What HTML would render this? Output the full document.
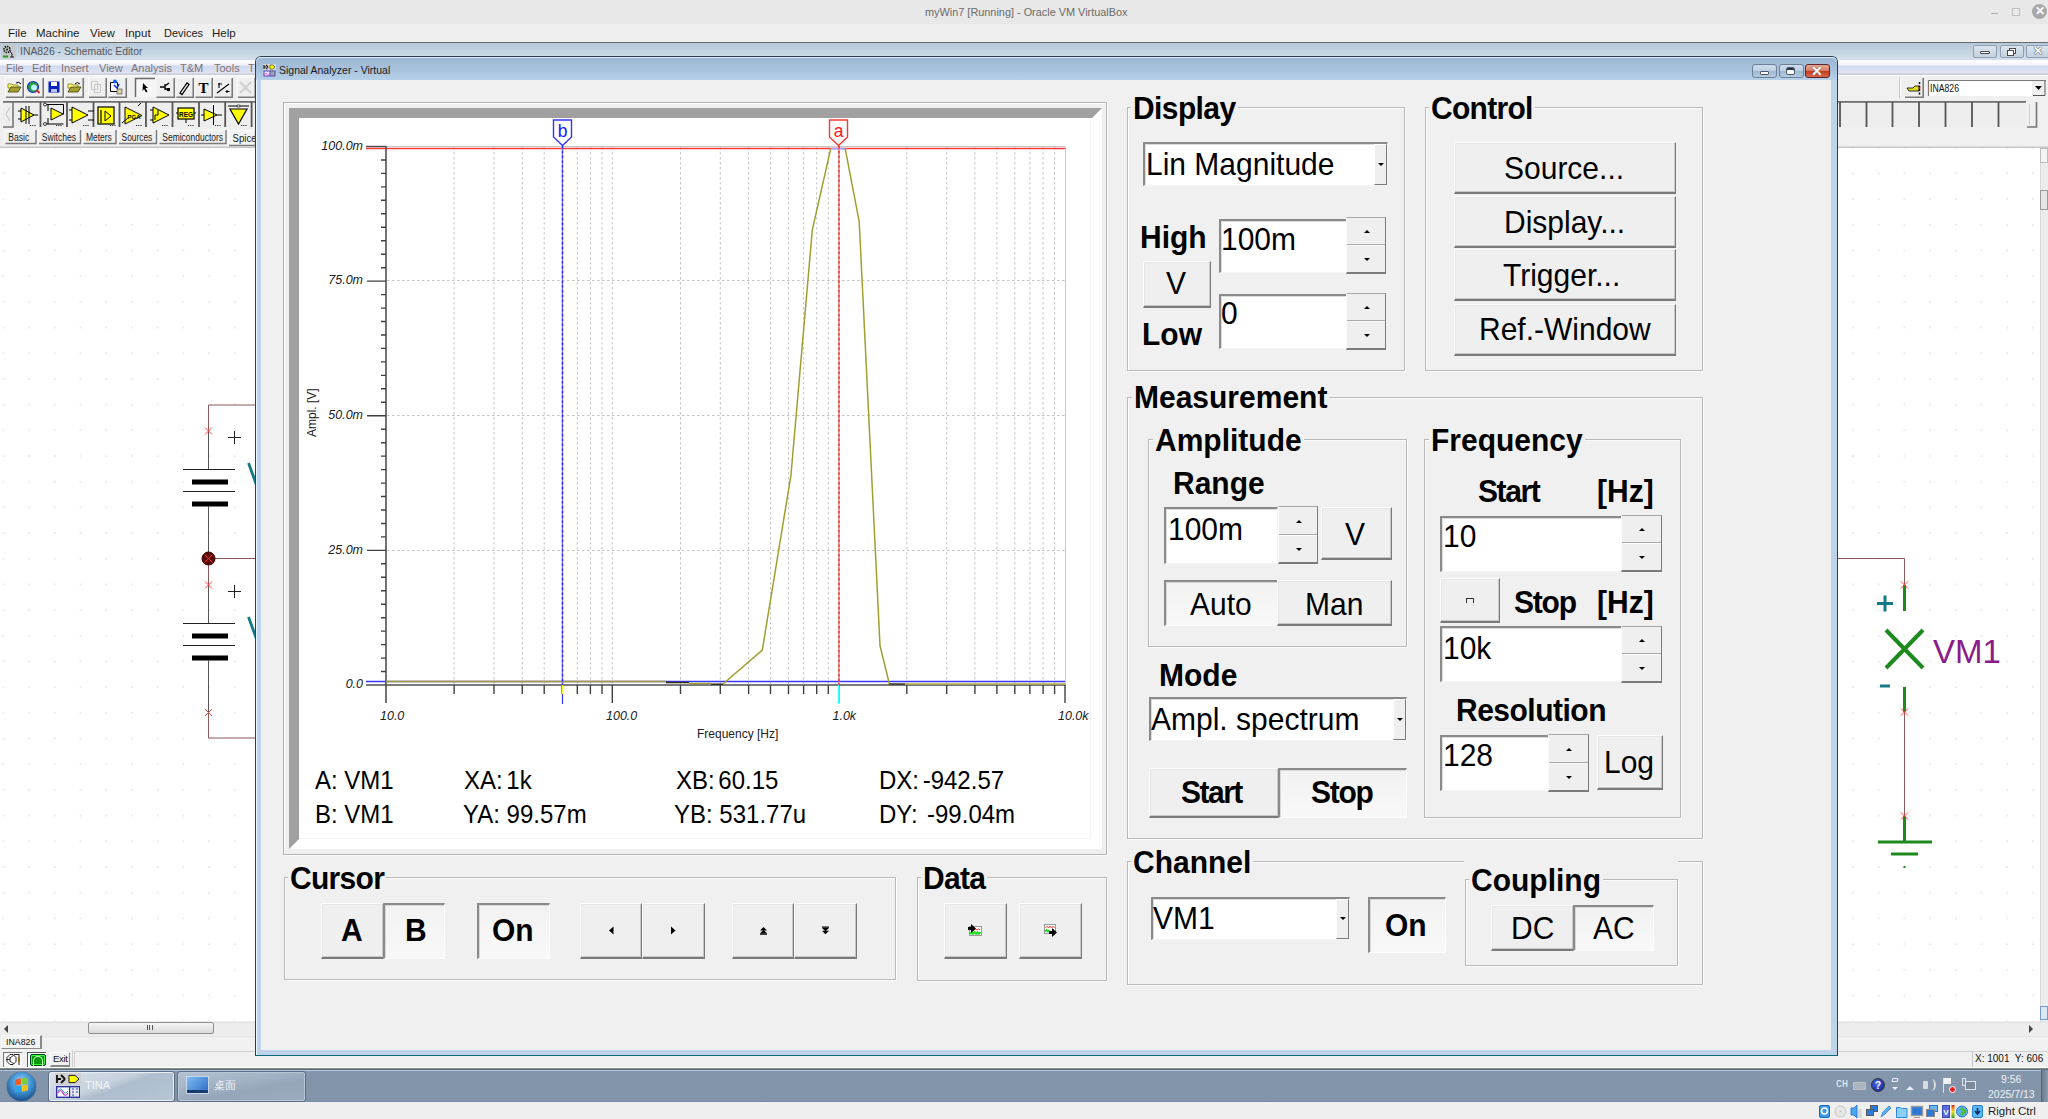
<!DOCTYPE html>
<html><head><meta charset="utf-8">
<style>
*{box-sizing:border-box}
html,body{margin:0;padding:0}
body{width:2048px;height:1119px;position:relative;overflow:hidden;background:#efefef;font-family:"Liberation Sans",sans-serif;color:#000}
.a{position:absolute}
.t{position:absolute;line-height:1;white-space:pre}
.b30{font-size:30px;font-weight:bold;transform:scaleY(1.065);transform-origin:0 84.65%}
.r30{font-size:30px;transform:scaleY(1.065);transform-origin:0 84.65%}
/* dialog buttons */
.btn{position:absolute;background:#efefef;border-top:1px solid #fdfdfd;border-left:1px solid #fdfdfd;border-right:1px solid #7a7a7a;border-bottom:2px solid #7a7a7a;box-shadow:inset -1px -1px 0 #c8c8c8, inset 1px 1px 0 #e6e6e6}
.btnp{position:absolute;background:linear-gradient(#f2f2f2,#f8f8f8);border-top:2px solid #8a8a8a;border-left:2px solid #8a8a8a;border-right:1px solid #fdfdfd;border-bottom:1px solid #fdfdfd;box-shadow:inset 1px 1px 0 #d8d8d8}
.edit{position:absolute;background:#fff;border-top:2px solid #8a8a8a;border-left:2px solid #8a8a8a;border-right:1px solid #f4f4f4;border-bottom:1px solid #f4f4f4;box-shadow:inset 1px 1px 0 #dcdcdc}
.grp{position:absolute;border:1px solid #b9b9b9;box-shadow:1px 1px 0 #fcfcfc, inset 1px 1px 0 #fcfcfc}
.lbl{position:absolute;line-height:1;white-space:pre;background:#f0f0f0;font-size:30px;font-weight:bold;padding:0 2px 0 2px;transform:scaleY(1.065);transform-origin:0 84.65%}
.spin{position:absolute;background:#efefef;border-top:1px solid #fdfdfd;border-left:1px solid #fdfdfd;border-right:1px solid #7a7a7a;border-bottom:1px solid #7a7a7a}
.arr{position:absolute;left:50%;top:50%;width:0;height:0;border-left:3px solid transparent;border-right:3px solid transparent;margin-left:-3px}
.up{border-bottom:3px solid #000;margin-top:-2px}
.dn{border-top:3px solid #000;margin-top:-2px}
</style></head>
<body>

<!-- ===== VirtualBox host title bar ===== -->
<div class="a" style="left:0;top:0;width:2048px;height:24px;background:#e8e8e8"></div>
<div class="t" style="left:925px;top:6.5px;font-size:10.9px;color:#6a6a6a">myWin7 [Running] - Oracle VM VirtualBox</div>
<div class="a" style="left:1991px;top:13px;width:7px;height:1px;background:#b0b0b0"></div>
<div class="a" style="left:2012px;top:8px;width:8px;height:8px;border:1px solid #c0c0c0"></div>
<div class="a" style="left:2032px;top:4px;width:15px;height:15px;border-radius:50%;background:#a8a8a8;color:#fff;font-size:12px;line-height:15px;text-align:center;font-weight:bold">&#x2715;</div>

<!-- ===== VirtualBox menu ===== -->
<div class="a" style="left:0;top:24px;width:2048px;height:18px;background:#efefef"></div>
<div class="t" style="left:8px;top:28px;font-size:11.5px;color:#1e1e1e">File</div>
<div class="t" style="left:36px;top:28px;font-size:11.5px;color:#1e1e1e">Machine</div>
<div class="t" style="left:90px;top:28px;font-size:11.5px;color:#1e1e1e">View</div>
<div class="t" style="left:125px;top:28px;font-size:11.5px;color:#1e1e1e">Input</div>
<div class="t" style="left:164px;top:28px;font-size:11px;color:#1e1e1e">Devices</div>
<div class="t" style="left:212px;top:28px;font-size:11.5px;color:#1e1e1e">Help</div>
<div class="a" style="left:0;top:42px;width:2048px;height:1px;background:#6a6a6a"></div>

<!-- ===== Guest: TINA window ===== -->
<!-- TINA title bar -->
<div class="a" style="left:0;top:43px;width:2048px;height:17px;background:linear-gradient(#b7c8da,#d4dfea)"></div>
<svg class="a" style="left:1px;top:44px" width="15" height="15" viewBox="0 0 15 15"><rect x="0.5" y="0.5" width="14" height="14" rx="1.5" fill="#c4c8cc"/><circle cx="6" cy="5.5" r="3" fill="none" stroke="#151515" stroke-width="1.6" stroke-dasharray="1.4 0.9"/><circle cx="6" cy="5.5" r="1" fill="#151515"/><path d="M9 7l2 3 M11 10v3 M9 13h4" stroke="#202020" stroke-width="1"/><rect x="2" y="11.5" width="5" height="2" fill="#20a020"/></svg>
<div class="t" style="left:20px;top:46.5px;font-size:10.4px;color:#505860">INA826 - Schematic Editor</div>
<!-- TINA window buttons (right) -->
<div class="a" style="left:1973px;top:45px;width:24px;height:13px;border:1px solid #8e9fb3;border-radius:2px;background:linear-gradient(#dbe5ef,#c3d1df)"></div>
<div class="a" style="left:1980px;top:51px;width:10px;height:3px;border:1px solid #4a4a4a;border-radius:1px;background:#fff"></div>
<div class="a" style="left:2000px;top:45px;width:24px;height:13px;border:1px solid #8e9fb3;border-radius:2px;background:linear-gradient(#dbe5ef,#c3d1df)"></div>
<div class="a" style="left:2009px;top:48px;width:7px;height:6px;border:1px solid #4a4a4a;background:#fff"></div>
<div class="a" style="left:2007px;top:50px;width:7px;height:6px;border:1px solid #4a4a4a;background:#fff"></div>
<div class="a" style="left:2026px;top:45px;width:24px;height:13px;border:1px solid #8e9fb3;border-radius:2px;background:linear-gradient(#dbe5ef,#c3d1df)"></div>
<div class="t" style="left:2033px;top:45px;font-size:12px;font-weight:bold;color:#fff;text-shadow:0 0 1px #333,0 0 1px #333">&#x2715;</div>

<!-- TINA menu -->
<div class="a" style="left:0;top:60px;width:2048px;height:15px;background:linear-gradient(#fdfdff 0,#fdfdff 2px,#eef0f8 5px,#d3daee 6px,#dfe3f4 13px,#c8ccd8 14px,#c8ccd8 15px)"></div>
<div class="t" style="left:6px;top:63px;font-size:11px;color:#7d7377">File</div>
<div class="t" style="left:32px;top:63px;font-size:11px;color:#7d7377">Edit</div>
<div class="t" style="left:61px;top:63px;font-size:11px;color:#7d7377">Insert</div>
<div class="t" style="left:99px;top:63px;font-size:11px;color:#7d7377">View</div>
<div class="t" style="left:131px;top:63px;font-size:11px;color:#7d7377">Analysis</div>
<div class="t" style="left:180px;top:63px;font-size:11px;color:#7d7377">T&amp;M</div>
<div class="t" style="left:214px;top:63px;font-size:11px;color:#7d7377">Tools</div>
<div class="t" style="left:248px;top:63px;font-size:11px;color:#7d7377">T</div>
<div class="a" style="left:0;top:75px;width:2048px;height:1px;background:#fdfdfd"></div>

<!-- toolbar row 1 -->
<div class="a" style="left:0;top:76px;width:2048px;height:72px;background:#f0f0f0"></div>
<!-- canvas -->
<div class="a" style="left:0;top:147px;width:2040px;height:874px;background-color:#fff;background-image:radial-gradient(circle at 1px 1px,#c8c8c8 0.5px,transparent 0.8px);background-size:25.69px 25.69px;background-position:2.5px 25.4px"></div>
<!-- vertical scrollbar -->
<div class="a" style="left:2040px;top:147px;width:8px;height:875px;background:#ececec;border-left:1px solid #dadada"></div>
<div class="a" style="left:2040px;top:148px;width:8px;height:15px;background:#f4f4f4;border:1px solid #bcbcbc"></div>
<div class="a" style="left:2040px;top:190px;width:8px;height:20px;background:#e6e6e6;border:1px solid #9a9a9a"></div>
<div class="a" style="left:2040px;top:1006px;width:8px;height:14px;background:#dbe8f6;border:1px solid #6f9bd0"></div>
<!-- horizontal scrollbar -->
<div class="a" style="left:0;top:1022px;width:2048px;height:14px;background:#ededed;border-top:1px solid #e2e2e2"></div>
<div class="a" style="left:4px;top:1025px;width:0;height:0;border-top:4px solid transparent;border-bottom:4px solid transparent;border-right:4px solid #444"></div>
<div class="a" style="left:2029px;top:1025px;width:0;height:0;border-top:4px solid transparent;border-bottom:4px solid transparent;border-left:4px solid #444"></div>
<div class="a" style="left:88px;top:1022px;width:126px;height:12px;border:1px solid #8f8f8f;border-radius:2px;background:linear-gradient(#f4f4f4,#dadada)"></div>
<div class="a" style="left:147px;top:1025px;width:6px;height:5px;border-left:1px solid #555;border-right:1px solid #555"></div>
<div class="a" style="left:149px;top:1025px;width:2px;height:5px;border-left:1px solid #555"></div>
<!-- file tab row -->
<div class="a" style="left:0;top:1036px;width:2048px;height:13px;background:#f0f0f0;border-top:1px solid #e4e4e4"></div>
<div class="a" style="left:1px;top:1035px;width:41px;height:14px;background:#f2f2f2;border-left:1px solid #fff;border-top:1px solid #fff;border-right:2px solid #8a8a8a;border-bottom:1px solid #8a8a8a"></div>
<div class="t" style="left:6px;top:1038px;font-size:8.8px;color:#111">INA826</div>
<!-- status bar -->
<div class="a" style="left:0;top:1049px;width:2048px;height:20px;background:#f0f0f0"></div>
<div class="a" style="left:3px;top:1052px;width:19px;height:15px;border-top:1px solid #777;border-left:1px solid #777;background:#f7f7f7"></div>
<svg class="a" style="left:5px;top:1053px" width="17" height="13" viewBox="0 0 17 13"><path d="M5 1.5l3 0 3 3v4l-3 3h-3l-3-3v-4z" fill="#fff" stroke="#222" stroke-width="1"/><path d="M1 6.5h4 M5 4v5 M5 5l4-3 M5 8l4 3" stroke="#222" stroke-width="0.9" fill="none"/><path d="M9 1.5h5 M14 1v11" stroke="#222" stroke-width="1" fill="none"/><rect x="13" y="4" width="2" height="5" fill="#8a7a20"/></svg>
<div class="a" style="left:27px;top:1052px;width:19px;height:15px;border-top:1px solid #555;border-left:1px solid #555;background:#f7f7f7"></div>
<div class="a" style="left:30px;top:1054px;width:16px;height:12px;background:#0a9a0a;border:1px solid #042;border-radius:2px;box-shadow:inset 0 0 0 1px #3f3"></div>
<div class="a" style="left:33px;top:1056px;width:10px;height:10px;border:1px solid #cfc;border-bottom:none;border-radius:5px 5px 0 0"></div>
<div class="a" style="left:50px;top:1052px;width:20px;height:15px;border-right:1px solid #888;border-bottom:2px solid #888;border-top:1px solid #fff;border-left:1px solid #fff;background:#f0f0f0"></div>
<div class="t" style="left:53px;top:1054px;font-size:9.5px;color:#111;letter-spacing:-0.3px">Exit</div>
<div class="a" style="left:72px;top:1050px;width:1px;height:18px;background:#cfcfcf"></div>
<div class="a" style="left:74px;top:1051px;width:1974px;height:17px;border-top:1px solid #d0d0d0;border-left:1px solid #d0d0d0"></div>
<div class="a" style="left:1972px;top:1051px;width:76px;height:17px;border-left:1px solid #c8c8c8"></div>
<div class="t" style="left:1975px;top:1054px;font-size:10px;color:#111">X: 1001  Y: 606</div>

<svg class="a" style="left:0;top:0" width="2048" height="150" viewBox="0 0 2048 150">
<rect x="5" y="78" width="19" height="19" fill="#efefef"/>
<path d="M5 77.5H23 M5.5 78V96" stroke="#fafafa" stroke-width="1" fill="none"/>
<path d="M23.25 78V97.2H6" stroke="#7a7a7a" stroke-width="1.6" fill="none"/>
<rect x="24.5" y="78" width="19.5" height="19" fill="#efefef"/>
<path d="M24.5 77.5H43 M25.0 78V96" stroke="#fafafa" stroke-width="1" fill="none"/>
<path d="M43.25 78V97.2H25.5" stroke="#7a7a7a" stroke-width="1.6" fill="none"/>
<rect x="44.5" y="78" width="19.5" height="19" fill="#efefef"/>
<path d="M44.5 77.5H63 M45.0 78V96" stroke="#fafafa" stroke-width="1" fill="none"/>
<path d="M63.25 78V97.2H45.5" stroke="#7a7a7a" stroke-width="1.6" fill="none"/>
<rect x="64.5" y="78" width="19.5" height="19" fill="#efefef"/>
<path d="M64.5 77.5H83 M65.0 78V96" stroke="#fafafa" stroke-width="1" fill="none"/>
<path d="M83.25 78V97.2H65.5" stroke="#7a7a7a" stroke-width="1.6" fill="none"/>
<rect x="88" y="78" width="19" height="19" fill="#efefef"/>
<path d="M88 77.5H106 M88.5 78V96" stroke="#fafafa" stroke-width="1" fill="none"/>
<path d="M106.25 78V97.2H89" stroke="#7a7a7a" stroke-width="1.6" fill="none"/>
<rect x="107.5" y="78" width="19.5" height="19" fill="#efefef"/>
<path d="M107.5 77.5H126 M108.0 78V96" stroke="#fafafa" stroke-width="1" fill="none"/>
<path d="M126.25 78V97.2H108.5" stroke="#7a7a7a" stroke-width="1.6" fill="none"/>
<rect x="135" y="78" width="20" height="19" fill="#f7f7f7"/>
<path d="M135.5 97V78.5H155" stroke="#6a6a6a" stroke-width="1.5" fill="none"/>
<rect x="155.5" y="78" width="19.5" height="19" fill="#efefef"/>
<path d="M155.5 77.5H174 M156.0 78V96" stroke="#fafafa" stroke-width="1" fill="none"/>
<path d="M174.25 78V97.2H156.5" stroke="#7a7a7a" stroke-width="1.6" fill="none"/>
<rect x="175.5" y="78" width="18.5" height="19" fill="#efefef"/>
<path d="M175.5 77.5H193 M176.0 78V96" stroke="#fafafa" stroke-width="1" fill="none"/>
<path d="M193.25 78V97.2H176.5" stroke="#7a7a7a" stroke-width="1.6" fill="none"/>
<rect x="194.5" y="78" width="18.5" height="19" fill="#efefef"/>
<path d="M194.5 77.5H212 M195.0 78V96" stroke="#fafafa" stroke-width="1" fill="none"/>
<path d="M212.25 78V97.2H195.5" stroke="#7a7a7a" stroke-width="1.6" fill="none"/>
<rect x="213.5" y="78" width="19.5" height="19" fill="#efefef"/>
<path d="M213.5 77.5H232 M214.0 78V96" stroke="#fafafa" stroke-width="1" fill="none"/>
<path d="M232.25 78V97.2H214.5" stroke="#7a7a7a" stroke-width="1.6" fill="none"/>
<rect x="237" y="78" width="19" height="19" fill="#efefef"/>
<path d="M237 77.5H255 M237.5 78V96" stroke="#fafafa" stroke-width="1" fill="none"/>
<path d="M255.25 78V97.2H238" stroke="#7a7a7a" stroke-width="1.6" fill="none"/>
<path d="M8 84h4l1 1h5v3h-10z" fill="#ffff90" stroke="#808000" stroke-width="0.8"/>
<path d="M8 92l3-5h10l-3 5z" fill="#a8a030" stroke="#404000" stroke-width="0.8"/>
<path d="M16 83q3-2 5 1" stroke="#000" stroke-width="1" fill="none"/>
<circle cx="33" cy="87" r="5.5" fill="#20a040" stroke="#2030c0" stroke-width="1.2"/><circle cx="34" cy="87.5" r="3" fill="#c0f0ff"/><path d="M36.5 90l3 3" stroke="#e02020" stroke-width="2"/>
<rect x="48.5" y="81.5" width="11" height="11" fill="#0020c0"/><rect x="51" y="82" width="6" height="4" fill="#fff"/><rect x="51" y="89" width="6" height="3" fill="#c0c0ff"/>
<path d="M68 84h4l1 1h5v3h-10z" fill="#ffff90" stroke="#808000" stroke-width="0.8"/>
<path d="M68 92l3-5h10l-3 5z" fill="#a8a030" stroke="#404000" stroke-width="0.8"/>
<path d="M75 84q2-3 5 0" stroke="#000" stroke-width="1" fill="none"/>
<path d="M91.5 81.5h6v8h-6z M94.5 84.5h6v8h-6z" fill="#f0f0f0" stroke="#c8c8c8" stroke-width="1"/>
<path d="M110.5 82.5h7v9h-7z" fill="#fff" stroke="#000" stroke-width="1"/><path d="M114 85l3 3 2-4" stroke="#1030e0" stroke-width="1.5" fill="none"/><rect x="117" y="89" width="5" height="5" fill="#d8d0a0" stroke="#555" stroke-width="0.7"/><circle cx="115" cy="81.5" r="2" fill="#1060ff"/>
<path d="M143 83l5 5h-2.5l2 3.5-1.5 1-2-3.5-1.5 2z" fill="#000"/>
<path d="M160 87h5 M165 84v6 M165 86l4-3 M165 88l4 3" stroke="#000" stroke-width="1.3" fill="none"/><rect x="167" y="88" width="3" height="3" fill="#000"/>
<path d="M180 93l7-10 2 1.5-7 10z" fill="none" stroke="#000" stroke-width="1.3"/>
<text x="203.5" y="93" text-anchor="middle" font-family="Liberation Serif" font-weight="bold" font-size="15" fill="#000">T</text>
<path d="M217 93l12-9 M218 84h4 M219 83v5 M227 90v3 M225.5 91.5h4" stroke="#000" stroke-width="1.1" fill="none"/>
<path d="M240 82l11 11 M251 82l-11 11" stroke="#d0d0d0" stroke-width="2.2" fill="none"/>
<rect x="3" y="101" width="253" height="26" fill="#eeeeee"/>
<path d="M3 101.8H256" stroke="#6e6e6e" stroke-width="1.8"/>
<path d="M13 101V127H3" stroke="#707070" stroke-width="1.5" fill="none"/>
<path d="M10 107l-4 7 4 7" stroke="#c0c0c0" stroke-width="1" fill="none"/>
<path d="M40.5 102V127" stroke="#555" stroke-width="1.8"/>
<path d="M67 102V127" stroke="#555" stroke-width="1.8"/>
<path d="M93.5 102V127" stroke="#555" stroke-width="1.8"/>
<path d="M119.5 102V127" stroke="#555" stroke-width="1.8"/>
<path d="M146 102V127" stroke="#555" stroke-width="1.8"/>
<path d="M172.5 102V127" stroke="#555" stroke-width="1.8"/>
<path d="M199 102V127" stroke="#555" stroke-width="1.8"/>
<path d="M225.2 102V127" stroke="#555" stroke-width="1.8"/>
<path d="M251.6 102V127" stroke="#555" stroke-width="1.8"/>
<path d="M21 108V122L34 115.0Z" fill="#ffff00" stroke="#000" stroke-width="1"/>
<path d="M18 111h3 M18 119h3 M34 115h4 M26 106v18 M29 106v18" stroke="#000" stroke-width="1" fill="none"/>
<path d="M30 125.5h6" stroke="#333" stroke-width="1" stroke-dasharray="1.2 1"/>
<path d="M51 108V120L63 114.0Z" fill="#ffff00" stroke="#000" stroke-width="1"/>
<path d="M43.5 104.5h20v10 M43.5 124h20 M48 105v6 M48 118v6" stroke="#000" stroke-width="1" fill="none"/><circle cx="45" cy="104.5" r="1.5" fill="#fff" stroke="#000" stroke-width="0.8"/><circle cx="45" cy="124" r="1.5" fill="#fff" stroke="#000" stroke-width="0.8"/>
<path d="M56 125.5h6" stroke="#333" stroke-width="1" stroke-dasharray="1.2 1"/>
<path d="M72 107V123L88 115.0Z" fill="#ffff00" stroke="#000" stroke-width="1"/>
<path d="M69 110h3 M69 120h3 M88 111h6 M88 120h6" stroke="#000" stroke-width="1" fill="none"/>
<path d="M83 125.5h6" stroke="#333" stroke-width="1" stroke-dasharray="1.2 1"/>
<rect x="98" y="107" width="16" height="17" fill="#ffff00" stroke="#000" stroke-width="1.2"/><path d="M105 111v10l6-5z" fill="none" stroke="#000" stroke-width="1"/><path d="M101 110v13" stroke="#000" stroke-width="1.2"/>
<path d="M110 125.5h6" stroke="#333" stroke-width="1" stroke-dasharray="1.2 1"/>
<path d="M125 107V124L142 115.5Z" fill="#ffff00" stroke="#000" stroke-width="1"/>
<path d="M122 123l6-5 M138 106l3-3" stroke="#000" stroke-width="1" fill="none"/><text x="127.5" y="119" font-family="Liberation Sans" font-size="6" font-weight="bold" fill="#000">PGA</text>
<path d="M136 125.5h6" stroke="#333" stroke-width="1" stroke-dasharray="1.2 1"/>
<path d="M153 107V123L169 115.0Z" fill="#ffff00" stroke="#000" stroke-width="1"/>
<path d="M150 110h3 M150 120h3 M155 120v-5h3v-5" stroke="#000" stroke-width="1" fill="none"/>
<path d="M162 125.5h6" stroke="#333" stroke-width="1" stroke-dasharray="1.2 1"/>
<rect x="178" y="108" width="16" height="11" fill="#ffff00" stroke="#000" stroke-width="1.2"/><text x="186" y="117" text-anchor="middle" font-family="Liberation Sans" font-size="6.5" font-weight="bold" fill="#000">REG</text><path d="M176 113h2 M194 113h2 M186 119v4" stroke="#000" stroke-width="1" fill="none"/>
<path d="M188 125.5h6" stroke="#333" stroke-width="1" stroke-dasharray="1.2 1"/>
<path d="M204 109V121L217 115.0Z" fill="#ffff00" stroke="#000" stroke-width="1"/>
<path d="M201 115h3 M217 115h5 M213.5 105v20" stroke="#000" stroke-width="1" fill="none"/>
<path d="M215 125.5h6" stroke="#333" stroke-width="1" stroke-dasharray="1.2 1"/>
<path d="M230 109h17l-8.5 15z" fill="#ffff00" stroke="#000" stroke-width="1.2"/><path d="M228 106h21" stroke="#000" stroke-width="1"/><ellipse cx="238.5" cy="106" rx="2" ry="1" fill="#fff" stroke="#000" stroke-width="0.7"/>
<path d="M241 125.5h6" stroke="#333" stroke-width="1" stroke-dasharray="1.2 1"/>
<rect x="4.5" y="130" width="32.0" height="13" fill="#efefef"/>
<path d="M5.0 143V130.5H35.5" stroke="#fcfcfc" stroke-width="1" fill="none"/>
<path d="M36.0 130V143.5H5.5" stroke="#7a7a7a" stroke-width="1.4" fill="none"/>
<text x="8.3" y="140.5" font-family="Liberation Sans" font-size="10" fill="#1a1a1a" textLength="21" lengthAdjust="spacingAndGlyphs">Basic</text>
<rect x="38" y="130" width="43" height="13" fill="#efefef"/>
<path d="M38.5 143V130.5H80" stroke="#fcfcfc" stroke-width="1" fill="none"/>
<path d="M80.5 130V143.5H39" stroke="#7a7a7a" stroke-width="1.4" fill="none"/>
<text x="41.8" y="140.5" font-family="Liberation Sans" font-size="10" fill="#1a1a1a" textLength="34.3" lengthAdjust="spacingAndGlyphs">Switches</text>
<rect x="82.5" y="130" width="34.0" height="13" fill="#efefef"/>
<path d="M83.0 143V130.5H115.5" stroke="#fcfcfc" stroke-width="1" fill="none"/>
<path d="M116.0 130V143.5H83.5" stroke="#7a7a7a" stroke-width="1.4" fill="none"/>
<text x="85.9" y="140.5" font-family="Liberation Sans" font-size="10" fill="#1a1a1a" textLength="25.9" lengthAdjust="spacingAndGlyphs">Meters</text>
<rect x="118" y="130" width="39" height="13" fill="#efefef"/>
<path d="M118.5 143V130.5H156" stroke="#fcfcfc" stroke-width="1" fill="none"/>
<path d="M156.5 130V143.5H119" stroke="#7a7a7a" stroke-width="1.4" fill="none"/>
<text x="121.6" y="140.5" font-family="Liberation Sans" font-size="10" fill="#1a1a1a" textLength="30.6" lengthAdjust="spacingAndGlyphs">Sources</text>
<rect x="158.5" y="130" width="68.0" height="13" fill="#efefef"/>
<path d="M159.0 143V130.5H225.5" stroke="#fcfcfc" stroke-width="1" fill="none"/>
<path d="M226.0 130V143.5H159.5" stroke="#7a7a7a" stroke-width="1.4" fill="none"/>
<text x="162.3" y="140.5" font-family="Liberation Sans" font-size="10" fill="#1a1a1a" textLength="60.8" lengthAdjust="spacingAndGlyphs">Semiconductors</text>
<rect x="228" y="131" width="28" height="15" fill="#f4f4f4"/>
<path d="M228.5 145V130.5H255" stroke="#fcfcfc" stroke-width="1" fill="none"/>
<path d="M255.5 130V145.5H229" stroke="#7a7a7a" stroke-width="1.4" fill="none"/>
<text x="232.6" y="142" font-family="Liberation Sans" font-size="10" fill="#1a1a1a" textLength="24" lengthAdjust="spacingAndGlyphs">Spice</text>
<path d="M0 147.2H2048" stroke="#c6c6c6" stroke-width="1.5"/>
<path d="M1899.5 77V98" stroke="#c8c8c8" stroke-width="1"/><path d="M1900.5 77V98" stroke="#fff" stroke-width="1"/>
<rect x="1904" y="78" width="20" height="19" fill="#efefef"/><path d="M1923.2 78V97.2H1905" stroke="#7a7a7a" stroke-width="1.6" fill="none"/>
<path d="M1907 88h6l2-2h4v5h-10z" fill="#e0e020" stroke="#000" stroke-width="0.8"/><path d="M1919.5 82v14" stroke="#000" stroke-width="1.5" stroke-dasharray="2 1.5"/><circle cx="1919.5" cy="88" r="1" fill="#e00"/>
<rect x="1928" y="80" width="118" height="16" fill="#fff"/><path d="M1928.5 96V80.5H2046" stroke="#7a7a7a" stroke-width="1.2" fill="none"/>
<rect x="2032" y="81" width="13" height="14" fill="#efefef"/><path d="M2045 81V95.5H2033" stroke="#555" stroke-width="1" fill="none"/><path d="M2035 86h7l-3.5 4z" fill="#000"/>
<text x="1930" y="92" font-family="Liberation Sans" font-size="11" fill="#111" textLength="29" lengthAdjust="spacingAndGlyphs">INA826</text>
<rect x="1838" y="101" width="188" height="26" fill="#eeeeee"/><path d="M1838 101.8H2026" stroke="#6e6e6e" stroke-width="1.8"/>
<path d="M1840 102V127" stroke="#555" stroke-width="1.8"/>
<path d="M1866.5 102V127" stroke="#555" stroke-width="1.8"/>
<path d="M1892.5 102V127" stroke="#555" stroke-width="1.8"/>
<path d="M1919 102V127" stroke="#555" stroke-width="1.8"/>
<path d="M1945.5 102V127" stroke="#555" stroke-width="1.8"/>
<path d="M1972 102V127" stroke="#555" stroke-width="1.8"/>
<path d="M1998.5 102V127" stroke="#555" stroke-width="1.8"/>
<path d="M2036.5 102V127H2027" stroke="#777" stroke-width="1.6" fill="none"/><path d="M2029.5 104V125" stroke="#d0d0d0" stroke-width="1"/>
</svg>
<svg class="a" style="left:0;top:0" width="2048" height="1119" viewBox="0 0 2048 1119">
 <g fill="none" stroke-linecap="butt">
  <!-- left circuit -->
  <path d="M208.5 405 H256" stroke="#8a5a5a" stroke-width="1"/>
  <path d="M208.5 405 V431" stroke="#8a5a5a" stroke-width="1"/>
  <path d="M208.5 431 V469" stroke="#555" stroke-width="1"/>
  <path d="M183 469.5 H235 M183 491.5 H235" stroke="#222" stroke-width="1.2"/>
  <path d="M192 482 H228 M192 504 H228" stroke="#000" stroke-width="5"/>
  <path d="M208.5 506 V552" stroke="#555" stroke-width="1"/>
  <path d="M208.5 565 V585" stroke="#8a5a5a" stroke-width="1"/>
  <path d="M215 558.5 H256" stroke="#8a5a5a" stroke-width="1"/>
  <path d="M208.5 585 V623" stroke="#555" stroke-width="1"/>
  <path d="M183 623.5 H235 M183 645.5 H235" stroke="#222" stroke-width="1.2"/>
  <path d="M192 636 H228 M192 658 H228" stroke="#000" stroke-width="5"/>
  <path d="M208.5 660 V712" stroke="#555" stroke-width="1"/>
  <path d="M208.5 712 V738 H256" stroke="#8a5a5a" stroke-width="1"/>
  <path d="M228 437.5 H241 M234.5 431 V444" stroke="#222" stroke-width="1"/>
  <path d="M228 591.5 H241 M234.5 585 V598" stroke="#222" stroke-width="1"/>
  <path d="M205 427.5 l7 7 m0 -7 l-7 7 M205 581.5 l7 7 m0 -7 l-7 7 M205 709 l7 7 m0 -7 l-7 7" stroke="#ff4040" stroke-width="1"/>
  <circle cx="208.5" cy="558.5" r="6.5" fill="#5a0a0a" stroke="#3a0000"/>
  <path d="M204.5 554.5 l8 8 m0 -8 l-8 8" stroke="#ff3030" stroke-width="1"/>
  <path d="M248.5 463 L256.5 485" stroke="#107a86" stroke-width="2.8"/>
  <path d="M248.5 617 L256.5 639" stroke="#107a86" stroke-width="2.8"/>
  <!-- right circuit -->
  <path d="M1837 558.5 H1904.5 V585" stroke="#8a5a5a" stroke-width="1"/>
  <path d="M1904.5 585 V611" stroke="#1e8a1e" stroke-width="3"/>
  <path d="M1886 630 L1923 668 M1923 630 L1886 668" stroke="#1e8a1e" stroke-width="4"/>
  <path d="M1904.5 687 V712" stroke="#1e8a1e" stroke-width="3"/>
  <path d="M1904.5 712 V816" stroke="#8a5a5a" stroke-width="1"/>
  <path d="M1904.5 816 V842" stroke="#1e8a1e" stroke-width="3"/>
  <path d="M1878 842 H1932" stroke="#1e8a1e" stroke-width="3"/>
  <path d="M1891 854 H1918" stroke="#1e8a1e" stroke-width="3"/>
  <rect x="1903.5" y="866" width="2" height="2" fill="#1e8a1e" stroke="none"/>
  <path d="M1877 603.5 H1893 M1885 595.5 V611.5" stroke="#127a8a" stroke-width="3"/>
  <path d="M1880 686 H1890" stroke="#127a8a" stroke-width="3"/>
  <path d="M1901 581.5 l7 7 m0 -7 l-7 7 M1901 708.5 l7 7 m0 -7 l-7 7 M1901 812.5 l7 7 m0 -7 l-7 7" stroke="#ff4040" stroke-width="1"/>
 </g>
 <text x="1933" y="663" font-family="Liberation Sans" font-size="33" fill="#8b1a8b">VM1</text>
</svg>


<!-- ===== Signal analyzer dialog ===== -->
<!-- dialog frame -->
<div class="a" style="left:255px;top:56px;width:1583px;height:1000px;border:1px solid #2e3d4e;border-bottom-color:#0a6a78;border-radius:6px 6px 0 0;background:#bcd3ea;box-shadow:inset 1px 1px 0 #e8f6ff"></div>
<div class="a" style="left:256px;top:57px;width:1581px;height:23px;border-radius:5px 5px 0 0;background:linear-gradient(#9bb6d2,#a9c3de 60%,#b8d1ea);box-shadow:inset 0 1px 0 #d8ecfa"></div>
<div class="a" style="left:261px;top:80px;width:1570px;height:970px;background:#f0f0f0"></div>
<!-- title icon -->
<svg class="a" style="left:263px;top:64px" width="13" height="13" viewBox="0 0 13 13"><rect x="0" y="0" width="13" height="6" fill="#d8d8d8"/><path d="M1 1v4 M1 3h2 M3 1l2 2 M3 5l2-2" stroke="#202020" stroke-width="1.2" fill="none"/><path d="M7 1h3l2 2-2 2h-3z" fill="#ffff00" stroke="#303030" stroke-width="0.6"/><rect x="0.5" y="6.5" width="12" height="6" fill="#5a50b0"/><rect x="1.5" y="7.5" width="5" height="4" fill="#f0e0ff"/><path d="M1.5 10.5q1.5-3 2.5 0t2.5-1" stroke="#e040e0" stroke-width="0.8" fill="none"/><rect x="7.5" y="7.5" width="4" height="4" fill="#9aa0b0"/></svg>
<div class="t" style="left:279px;top:65px;font-size:10.5px;color:#1a1a1a">Signal Analyzer - Virtual</div>
<!-- window buttons -->
<div class="a" style="left:1752px;top:64px;width:25px;height:14px;border:1px solid #6d7f96;border-radius:3px;background:linear-gradient(#cddcec 0,#c2d3e6 45%,#9fb6cf 50%,#b6cce3 100%)"></div>
<div class="a" style="left:1760px;top:71px;width:9px;height:4px;border:1px solid #505a68;border-radius:1px;background:#fff"></div>
<div class="a" style="left:1779px;top:64px;width:25px;height:14px;border:1px solid #6d7f96;border-radius:3px;background:linear-gradient(#cddcec 0,#c2d3e6 45%,#9fb6cf 50%,#b6cce3 100%)"></div>
<div class="a" style="left:1786px;top:67px;width:9px;height:8px;border:1px solid #505a68;border-radius:2px;background:#fff;box-shadow:inset 0 2px 0 #26364a"></div>
<div class="a" style="left:1805px;top:64px;width:25px;height:14px;border:1px solid #5a2630;border-radius:3px;background:linear-gradient(#e8a595 0,#d8826c 45%,#c23a1a 52%,#d86a50 100%)"></div>
<div class="t" style="left:1811px;top:64px;font-size:14px;font-weight:bold;color:#fff;text-shadow:0 0 1px #333">&#x2715;</div>

<!-- ===== chart panel ===== -->
<div class="a" style="left:283px;top:102px;width:824px;height:753px;border:1px solid #b4b4b4;box-shadow:1px 1px 0 #fcfcfc, inset 1px 1px 0 #fcfcfc"></div>
<div class="a" style="left:289px;top:108px;width:815px;height:743px;background:#fff"></div>
<svg class="a" style="left:289px;top:108px" width="817" height="745"><rect x="0" y="0" width="817" height="745" fill="#efefef"/><rect x="0" y="0" width="813" height="741" fill="#fff"/><polygon points="0,0 813,0 803,10 10,10 10,731 0,741" fill="#a0a0a0"/><path d="M801.5 10V730.5H10" stroke="#f4f4f4" stroke-width="1" fill="none"/></svg>

<svg class="a" style="left:0;top:0" width="2048" height="1119" viewBox="0 0 2048 1119">
<path d="M454.1 147V684 M494.0 147V684 M522.3 147V684 M544.2 147V684 M562.1 147V684 M577.3 147V684 M590.4 147V684 M602.0 147V684 M680.5 147V684 M720.3 147V684 M748.6 147V684 M770.5 147V684 M788.5 147V684 M803.6 147V684 M816.7 147V684 M828.3 147V684 M906.8 147V684 M946.7 147V684 M974.9 147V684 M996.9 147V684 M1014.8 147V684 M1029.9 147V684 M1043.1 147V684 M1054.6 147V684 M612.3 147V684 M838.7 147V684 M387 280.5H1065 M387 415.5H1065 M387 550.5H1065" stroke="#c4c4c4" stroke-width="1" stroke-dasharray="2.5 2.5" fill="none"/>
<path d="M386 146.5H1065.5V685" stroke="#c8c8c8" stroke-width="1" fill="none"/>
<path d="M366 148.5H1065" stroke="#ff3838" stroke-width="1.6" fill="none"/>
<path d="M366 681.5H1065" stroke="#3838ff" stroke-width="1.6" fill="none"/>
<path d="M386 146V703 M366 685H1065.5 M366 146.5H386" stroke="#505050" stroke-width="1.6" fill="none"/>
<path d="M381 160.0H386 M381 173.4H386 M381 186.9H386 M381 200.3H386 M381 213.8H386 M381 227.3H386 M381 240.7H386 M381 254.2H386 M381 267.7H386 M367 281.1H386 M381 294.6H386 M381 308.1H386 M381 321.5H386 M381 335.0H386 M381 348.4H386 M381 361.9H386 M381 375.4H386 M381 388.8H386 M381 402.3H386 M367 415.8H386 M381 429.2H386 M381 442.7H386 M381 456.1H386 M381 469.6H386 M381 483.1H386 M381 496.5H386 M381 510.0H386 M381 523.5H386 M381 536.9H386 M367 550.4H386 M381 563.8H386 M381 577.3H386 M381 590.8H386 M381 604.2H386 M381 617.7H386 M381 631.1H386 M381 644.6H386 M381 658.1H386 M381 671.5H386 M454.1 685V694 M494.0 685V694 M522.3 685V694 M544.2 685V694 M562.1 685V694 M577.3 685V694 M590.4 685V694 M602.0 685V694 M680.5 685V694 M720.3 685V694 M748.6 685V694 M770.5 685V694 M788.5 685V694 M803.6 685V694 M816.7 685V694 M828.3 685V694 M906.8 685V694 M946.7 685V694 M974.9 685V694 M996.9 685V694 M1014.8 685V694 M1029.9 685V694 M1043.1 685V694 M1054.6 685V694 M612.3 685V703 M838.7 685V703 M1065.0 685V703" stroke="#404040" stroke-width="1.4" fill="none"/>
<path d="M386 681.5H666" stroke="#a29e30" stroke-width="1.6" fill="none"/>
<path d="M666 682.5H689 M711 684.2H723" stroke="#303010" stroke-width="1.4" fill="none"/>
<path d="M689 683.5H711" stroke="#a29e30" stroke-width="1.4" fill="none"/>
<path d="M723 684 L762.3 650 L790.9 475.7 L812.3 230 L830.7 148.6" stroke="#a29e30" stroke-width="1.5" fill="none"/>
<path d="M830.7 148.6H845.2" stroke="#9ea0ff" stroke-width="1.6" fill="none"/>
<path d="M845.2 148.6 L859.2 221.5 L880 645.7 L889.4 684" stroke="#a29e30" stroke-width="1.5" fill="none"/>
<path d="M889.4 684H905" stroke="#303010" stroke-width="1.4" fill="none"/>
<path d="M905 684H1065" stroke="#b0ac40" stroke-width="1.4" fill="none"/>
<path d="M562.5 146V685" stroke="#7676c8" stroke-width="1.3" fill="none"/>
<path d="M562.5 146V685" stroke="#2828ff" stroke-width="1.4" stroke-dasharray="2.4 2.4" fill="none"/>
<path d="M562.5 685V694" stroke="#ffff30" stroke-width="1.5" fill="none"/>
<path d="M562.5 694V704" stroke="#3434ff" stroke-width="1.2" fill="none"/>
<path d="M839 146V685" stroke="#cc8080" stroke-width="1.3" fill="none"/>
<path d="M839 146V685" stroke="#ff3030" stroke-width="1.5" stroke-dasharray="2.4 2.4" fill="none"/>
<path d="M838.5 685V704" stroke="#30ffff" stroke-width="1.5" fill="none"/>
<path d="M553.5 120H571.5V137L562.5 145.5L553.5 137Z" stroke="#3434ff" stroke-width="1.4" fill="#fff"/>
<text x="562.5" y="137" text-anchor="middle" font-family="Liberation Sans" font-size="17.5" fill="#1515ff">b</text>
<path d="M829.5 120H847.5V137L838.5 145.5L829.5 137Z" stroke="#ff3434" stroke-width="1.4" fill="#fff"/>
<text x="838.5" y="137" text-anchor="middle" font-family="Liberation Sans" font-size="17.5" fill="#ff1515">a</text>
<text transform="translate(363 149.7) scale(1 1.08)" text-anchor="end" font-family="Liberation Sans" font-style="italic" font-size="12.5" fill="#202020">100.0m</text>
<text transform="translate(363 284.3) scale(1 1.08)" text-anchor="end" font-family="Liberation Sans" font-style="italic" font-size="12.5" fill="#202020">75.0m</text>
<text transform="translate(363 418.9) scale(1 1.08)" text-anchor="end" font-family="Liberation Sans" font-style="italic" font-size="12.5" fill="#202020">50.0m</text>
<text transform="translate(363 553.6) scale(1 1.08)" text-anchor="end" font-family="Liberation Sans" font-style="italic" font-size="12.5" fill="#202020">25.0m</text>
<text transform="translate(363 688.2) scale(1 1.08)" text-anchor="end" font-family="Liberation Sans" font-style="italic" font-size="12.5" fill="#202020">0.0</text>
<text transform="translate(380 719.8) scale(1 1.08)" font-family="Liberation Sans" font-style="italic" font-size="12.5" fill="#202020">10.0</text>
<text transform="translate(606 719.8) scale(1 1.08)" font-family="Liberation Sans" font-style="italic" font-size="12.5" fill="#202020">100.0</text>
<text transform="translate(832.5 719.8) scale(1 1.08)" font-family="Liberation Sans" font-style="italic" font-size="12.5" fill="#202020">1.0k</text>
<text transform="translate(1058 719.8) scale(1 1.08)" font-family="Liberation Sans" font-style="italic" font-size="12.5" fill="#202020">10.0k</text>
<text x="697" y="738" font-family="Liberation Sans" font-size="12" fill="#202020">Frequency [Hz]</text>
<text transform="translate(316 437) rotate(-90)" font-family="Liberation Sans" font-size="12" fill="#202020">Ampl. [V]</text>
</svg>

<!-- readouts -->
<div class="t" style="left:315px;top:769px;font-size:24px;transform:scaleY(1.065);transform-origin:0 84.65%">A: VM1</div>
<div class="t" style="left:315px;top:803px;font-size:24px;transform:scaleY(1.065);transform-origin:0 84.65%">B: VM1</div>
<div class="t" style="left:464px;top:769px;font-size:24px;transform:scaleY(1.065);transform-origin:0 84.65%;word-spacing:-3px">XA: 1k</div>
<div class="t" style="left:463px;top:803px;font-size:24px;transform:scaleY(1.065);transform-origin:0 84.65%">YA: 99.57m</div>
<div class="t" style="left:676px;top:769px;font-size:24px;transform:scaleY(1.065);transform-origin:0 84.65%;word-spacing:-3px">XB: 60.15</div>
<div class="t" style="left:674px;top:803px;font-size:24px;transform:scaleY(1.065);transform-origin:0 84.65%">YB: 531.77u</div>
<div class="t" style="left:879px;top:769px;font-size:24px;transform:scaleY(1.065);transform-origin:0 84.65%;word-spacing:-3px">DX: -942.57</div>
<div class="t" style="left:879px;top:803px;font-size:24px;transform:scaleY(1.065);transform-origin:0 84.65%;word-spacing:-2px">DY:  -99.04m</div>

<!-- ===== Cursor group ===== -->
<div class="grp" style="left:284px;top:877px;width:612px;height:103px"></div>
<div class="lbl" style="left:288px;top:864px;letter-spacing:-0.7px">Cursor</div>
<div class="btn" style="left:321px;top:903px;width:63px;height:56px"></div>
<div class="t b30" style="left:341px;top:916px">A</div>
<div class="btnp" style="left:383px;top:903px;width:62px;height:56px"></div>
<div class="t b30" style="left:405px;top:916px">B</div>
<div class="btnp" style="left:477px;top:903px;width:73px;height:56px"></div>
<div class="t b30" style="left:492px;top:916px">On</div>
<div class="btn" style="left:580px;top:903px;width:62px;height:56px"></div>
<div class="btn" style="left:642px;top:903px;width:63px;height:56px"></div>
<div class="btn" style="left:732px;top:903px;width:62px;height:56px"></div>
<div class="btn" style="left:794px;top:903px;width:63px;height:56px"></div>
<svg class="a" style="left:600px;top:920px" width="250" height="20"><path d="M9 10.5l4.5-4v8z" fill="#000"/><path d="M71 6.5l4.5 4-4.5 4z" fill="#000"/><path d="M163.5 7l-3.5 3.5h7z M163.5 10l-3.5 3.2h7z M160 13.5h7v1.3h-7z" fill="#000"/><path d="M222 6.5h7v1.3h-7z M225.5 11.2l-3.5-3.2h7z M225.5 14.2l-3.5-3.5h7z" fill="#000"/></svg>

<!-- ===== Data group ===== -->
<div class="grp" style="left:917px;top:877px;width:190px;height:104px"></div>
<div class="lbl" style="left:921px;top:864px;letter-spacing:-0.7px">Data</div>
<div class="btn" style="left:944px;top:903px;width:63px;height:56px"></div>
<svg class="a" style="left:966px;top:922px" width="18" height="16" viewBox="0 0 18 16"><rect x="3.5" y="4.5" width="12" height="9" fill="#fff" stroke="#9a9a9a"/><path d="M5 8l1.5-1 1.5 1 1.5-1 1.5 1 1.5-1 1.5 1" stroke="#ff2020" stroke-width="1" fill="none"/><path d="M4 12l1.5-2 1.5 2 1.5-2 1.5 2 1.5-2 1.5 2 1.5-2" stroke="#00e000" stroke-width="1.6" fill="none"/><path d="M2 5h3V2l5 4.5-5 4.5V8H2z" fill="#000"/></svg>
<div class="btn" style="left:1019px;top:903px;width:63px;height:56px"></div>
<svg class="a" style="left:1042px;top:922px" width="18" height="16" viewBox="0 0 18 16"><rect x="2.5" y="2.5" width="11" height="9" fill="#fff" stroke="#9a9a9a"/><path d="M3.5 5.5l1.5-1 1.5 1 1.5-1 1.5 1 1.5-1 1.5 1" stroke="#ff2020" stroke-width="1" fill="none"/><path d="M3 9.5l1.5-1.5 1.5 1.5 1.5-1.5" stroke="#00e000" stroke-width="1.6" fill="none"/><path d="M7 9h3V6l5 4.5-5 4.5v-3H7z" fill="#000"/></svg>

<!-- ===== Display group ===== -->
<div class="grp" style="left:1127px;top:107px;width:278px;height:264px"></div>
<div class="lbl" style="left:1131px;top:94px;letter-spacing:-0.6px">Display</div>
<div class="edit" style="left:1143px;top:142px;width:245px;height:44px"></div>
<div class="t r30" style="left:1146px;top:150px">Lin Magnitude</div>
<div class="spin" style="left:1374px;top:144px;width:13px;height:41px"><div class="arr dn"></div></div>
<div class="t b30" style="left:1140px;top:223px">High</div>
<div class="edit" style="left:1219px;top:219px;width:128px;height:54px"></div>
<div class="t r30" style="left:1221px;top:225px">100m</div>
<div class="a" style="left:1346px;top:217px;width:40px;height:57px;background:#efefef;border-top:1px solid #a8a8a8;border-left:1px solid #fbfbfb;border-right:1px solid #7a7a7a;border-bottom:2px solid #7a7a7a"><div class="a" style="left:0;top:26px;width:38px;height:2px;border-top:1px solid #a8a8a8;border-bottom:1px solid #fbfbfb"></div><div class="a" style="left:17px;top:12px;width:0;height:0;border-left:3.5px solid transparent;border-right:3.5px solid transparent;border-bottom:3.5px solid #000"></div><div class="a" style="left:17px;top:40px;width:0;height:0;border-left:3.5px solid transparent;border-right:3.5px solid transparent;border-top:3.5px solid #000"></div></div>
<div class="btn" style="left:1143px;top:261px;width:68px;height:47px"></div>
<div class="t r30" style="left:1166px;top:269px">V</div>
<div class="t b30" style="left:1142px;top:320px">Low</div>
<div class="edit" style="left:1219px;top:294px;width:128px;height:55px"></div>
<div class="t r30" style="left:1221px;top:299px">0</div>
<div class="a" style="left:1346px;top:293px;width:40px;height:57px;background:#efefef;border-top:1px solid #a8a8a8;border-left:1px solid #fbfbfb;border-right:1px solid #7a7a7a;border-bottom:2px solid #7a7a7a"><div class="a" style="left:0;top:26px;width:38px;height:2px;border-top:1px solid #a8a8a8;border-bottom:1px solid #fbfbfb"></div><div class="a" style="left:17px;top:12px;width:0;height:0;border-left:3.5px solid transparent;border-right:3.5px solid transparent;border-bottom:3.5px solid #000"></div><div class="a" style="left:17px;top:40px;width:0;height:0;border-left:3.5px solid transparent;border-right:3.5px solid transparent;border-top:3.5px solid #000"></div></div>

<!-- ===== Control group ===== -->
<div class="grp" style="left:1425px;top:107px;width:278px;height:264px"></div>
<div class="lbl" style="left:1429px;top:94px;letter-spacing:-0.7px">Control</div>
<div class="btn" style="left:1454px;top:142px;width:222px;height:52px"></div>
<div class="t r30" style="left:1504px;top:154px">Source...</div>
<div class="btn" style="left:1454px;top:196px;width:222px;height:52px"></div>
<div class="t r30" style="left:1504px;top:208px">Display...</div>
<div class="btn" style="left:1454px;top:249px;width:222px;height:52px"></div>
<div class="t r30" style="left:1503px;top:261px">Trigger...</div>
<div class="btn" style="left:1454px;top:304px;width:222px;height:52px"></div>
<div class="t r30" style="left:1479px;top:315px">Ref.-Window</div>

<!-- ===== Measurement group ===== -->
<div class="grp" style="left:1127px;top:397px;width:576px;height:442px"></div>
<div class="lbl" style="left:1132px;top:383px">Measurement</div>
<!-- amplitude -->
<div class="grp" style="left:1148px;top:439px;width:259px;height:208px"></div>
<div class="lbl" style="left:1153px;top:426px">Amplitude</div>
<div class="t b30" style="left:1173px;top:469px">Range</div>
<div class="edit" style="left:1164px;top:507px;width:114px;height:57px"></div>
<div class="t r30" style="left:1168px;top:515px">100m</div>
<div class="a" style="left:1278px;top:506px;width:40px;height:58px;background:#efefef;border-top:1px solid #a8a8a8;border-left:1px solid #fbfbfb;border-right:1px solid #7a7a7a;border-bottom:2px solid #7a7a7a"><div class="a" style="left:0;top:27px;width:38px;height:2px;border-top:1px solid #a8a8a8;border-bottom:1px solid #fbfbfb"></div><div class="a" style="left:17px;top:13px;width:0;height:0;border-left:3.5px solid transparent;border-right:3.5px solid transparent;border-bottom:3.5px solid #000"></div><div class="a" style="left:17px;top:41px;width:0;height:0;border-left:3.5px solid transparent;border-right:3.5px solid transparent;border-top:3.5px solid #000"></div></div>
<div class="btn" style="left:1321px;top:507px;width:71px;height:53px"></div>
<div class="t r30" style="left:1345px;top:520px">V</div>
<div class="btnp" style="left:1164px;top:580px;width:114px;height:46px"></div>
<div class="t r30" style="left:1190px;top:590px">Auto</div>
<div class="btn" style="left:1277px;top:580px;width:115px;height:46px"></div>
<div class="t r30" style="left:1305px;top:590px">Man</div>
<!-- frequency -->
<div class="grp" style="left:1424px;top:439px;width:257px;height:379px"></div>
<div class="lbl" style="left:1429px;top:426px">Frequency</div>
<div class="t b30" style="left:1478px;top:477px;letter-spacing:-1.4px">Start</div>
<div class="t b30" style="left:1597px;top:477px">[Hz]</div>
<div class="edit" style="left:1440px;top:516px;width:182px;height:56px"></div>
<div class="t r30" style="left:1443px;top:522px">10</div>
<div class="a" style="left:1621px;top:515px;width:41px;height:57px;background:#efefef;border-top:1px solid #a8a8a8;border-left:1px solid #fbfbfb;border-right:1px solid #7a7a7a;border-bottom:2px solid #7a7a7a"><div class="a" style="left:0;top:26px;width:39px;height:2px;border-top:1px solid #a8a8a8;border-bottom:1px solid #fbfbfb"></div><div class="a" style="left:17px;top:12px;width:0;height:0;border-left:3.5px solid transparent;border-right:3.5px solid transparent;border-bottom:3.5px solid #000"></div><div class="a" style="left:17px;top:40px;width:0;height:0;border-left:3.5px solid transparent;border-right:3.5px solid transparent;border-top:3.5px solid #000"></div></div>
<div class="btn" style="left:1440px;top:578px;width:60px;height:45px"></div>
<div class="a" style="left:1466px;top:598px;width:8px;height:5px;border-top:1px solid #333;border-left:1px solid #333;border-right:1px solid #333"></div>
<div class="t b30" style="left:1514px;top:588px;letter-spacing:-1.2px">Stop</div>
<div class="t b30" style="left:1597px;top:588px">[Hz]</div>
<div class="edit" style="left:1440px;top:626px;width:182px;height:56px"></div>
<div class="t r30" style="left:1443px;top:633.5px">10k</div>
<div class="a" style="left:1621px;top:626px;width:41px;height:57px;background:#efefef;border-top:1px solid #a8a8a8;border-left:1px solid #fbfbfb;border-right:1px solid #7a7a7a;border-bottom:2px solid #7a7a7a"><div class="a" style="left:0;top:26px;width:39px;height:2px;border-top:1px solid #a8a8a8;border-bottom:1px solid #fbfbfb"></div><div class="a" style="left:17px;top:12px;width:0;height:0;border-left:3.5px solid transparent;border-right:3.5px solid transparent;border-bottom:3.5px solid #000"></div><div class="a" style="left:17px;top:40px;width:0;height:0;border-left:3.5px solid transparent;border-right:3.5px solid transparent;border-top:3.5px solid #000"></div></div>
<div class="t b30" style="left:1456px;top:696px;letter-spacing:-0.5px">Resolution</div>
<div class="edit" style="left:1440px;top:735px;width:109px;height:56px"></div>
<div class="t r30" style="left:1443px;top:741px">128</div>
<div class="a" style="left:1548px;top:734px;width:41px;height:58px;background:#efefef;border-top:1px solid #a8a8a8;border-left:1px solid #fbfbfb;border-right:1px solid #7a7a7a;border-bottom:2px solid #7a7a7a"><div class="a" style="left:0;top:27px;width:39px;height:2px;border-top:1px solid #a8a8a8;border-bottom:1px solid #fbfbfb"></div><div class="a" style="left:17px;top:13px;width:0;height:0;border-left:3.5px solid transparent;border-right:3.5px solid transparent;border-bottom:3.5px solid #000"></div><div class="a" style="left:17px;top:41px;width:0;height:0;border-left:3.5px solid transparent;border-right:3.5px solid transparent;border-top:3.5px solid #000"></div></div>
<div class="btn" style="left:1597px;top:735px;width:66px;height:55px"></div>
<div class="t r30" style="left:1604px;top:748px">Log</div>
<!-- mode -->
<div class="t b30" style="left:1159px;top:661px">Mode</div>
<div class="edit" style="left:1149px;top:697px;width:258px;height:44px"></div>
<div class="t r30" style="left:1151px;top:705px">Ampl. spectrum</div>
<div class="spin" style="left:1393px;top:699px;width:13px;height:41px"><div class="arr dn"></div></div>
<div class="btn" style="left:1149px;top:768px;width:130px;height:50px"></div>
<div class="t b30" style="left:1181px;top:778px;letter-spacing:-1.5px">Start</div>
<div class="btnp" style="left:1278px;top:768px;width:129px;height:50px"></div>
<div class="t b30" style="left:1311px;top:778px;letter-spacing:-1.3px">Stop</div>

<!-- ===== Channel group ===== -->
<div class="grp" style="left:1127px;top:861px;width:576px;height:124px"></div>
<div class="lbl" style="left:1131px;top:848px">Channel</div>
<div class="edit" style="left:1151px;top:897px;width:199px;height:43px"></div>
<div class="t r30" style="left:1153px;top:904px">VM1</div>
<div class="spin" style="left:1336px;top:899px;width:13px;height:40px"><div class="arr dn"></div></div>
<div class="btnp" style="left:1368px;top:897px;width:78px;height:56px"></div>
<div class="t b30" style="left:1385px;top:911px">On</div>
<!-- coupling -->
<div class="a" style="left:1464px;top:855px;width:214px;height:14px;background:#f0f0f0"></div>
<div class="grp" style="left:1465px;top:879px;width:213px;height:87px"></div>
<div class="lbl" style="left:1469px;top:866px">Coupling</div>
<div class="btn" style="left:1491px;top:905px;width:83px;height:46px"></div>
<div class="t r30" style="left:1511px;top:914px">DC</div>
<div class="btnp" style="left:1573px;top:905px;width:81px;height:46px"></div>
<div class="t r30" style="left:1593px;top:914px">AC</div>


<!-- ===== Taskbar ===== -->
<div class="a" style="left:0;top:1067px;width:2048px;height:1px;background:#fcfcfc"></div>
<div class="a" style="left:0;top:1068px;width:2048px;height:2px;background:linear-gradient(#9c9c9c,#4e5864)"></div>
<div class="a" style="left:0;top:1070px;width:2048px;height:32px;background:linear-gradient(#8496ac,#8395ab 50%,#8094aa)"></div>
<div class="a" style="left:0;top:1070px;width:2048px;height:1px;background:#b4c4d6"></div>
<div class="a" style="left:0;top:1101px;width:2048px;height:1px;background:#7a8eaa"></div>
<!-- start orb -->
<div class="a" style="left:7px;top:1072px;width:29px;height:29px;border-radius:50%;background:radial-gradient(circle at 50% 35%,#9fd4f2 0,#3c8fd0 45%,#1a4f8a 80%,#0e2f5a 100%);box-shadow:0 0 1px #0a2040"></div>
<div class="a" style="left:15px;top:1079px;width:6px;height:6px;background:#f25a24;border-radius:2px 0 0 0;transform:skewY(-8deg)"></div>
<div class="a" style="left:22px;top:1078px;width:6px;height:6px;background:#7ccf3a;border-radius:0 2px 0 0;transform:skewY(-8deg)"></div>
<div class="a" style="left:15px;top:1086px;width:6px;height:6px;background:#2aa6ea;transform:skewY(-8deg)"></div>
<div class="a" style="left:22px;top:1085px;width:6px;height:6px;background:#f8c21a;transform:skewY(-8deg)"></div>
<!-- TINA taskbar button -->
<div class="a" style="left:48px;top:1071px;width:127px;height:31px;border:1px solid #5e6e84;border-radius:3px;background:linear-gradient(160deg,#dde5ee 0,#c4d0dd 45%,#aebdcd 55%,#b8c6d6 100%);box-shadow:inset 0 0 0 1px #e8eef5"></div>
<svg class="a" style="left:55px;top:1073px" width="26" height="26" viewBox="0 0 13 13"><rect x="0" y="0" width="13" height="6" fill="#d0d0d0"/><path d="M1 1v4 M1 3h2 M3 1l2 2 M3 5l2-2" stroke="#101010" stroke-width="0.9" fill="none"/><path d="M7 1.2h3l2 1.8-2 1.8h-3z" fill="#ffff00" stroke="#202020" stroke-width="0.5"/><rect x="0.5" y="6.5" width="12" height="6" fill="#3030a0"/><rect x="1.2" y="7.2" width="5.8" height="4.6" fill="#fff"/><path d="M1.5 10q1.2-2.5 2.4 0t2.6 0" stroke="#e020e0" stroke-width="0.6" fill="none"/><path d="M1.5 9q1.2-2 2.4 0t2.6 0" stroke="#20a0a0" stroke-width="0.5" fill="none"/><rect x="7.6" y="7.2" width="4.4" height="4.6" fill="#e8e8f0"/><path d="M8.5 8h1 M8.5 9.5h1 M8.5 11h1 M10.5 8h1 M10.5 9.5h1" stroke="#2040a0" stroke-width="0.6"/></svg>
<div class="t" style="left:85px;top:1080px;font-size:11px;color:#f4f6f8">TINA</div>
<!-- desktop button -->
<div class="a" style="left:177px;top:1071px;width:129px;height:31px;border:1px solid #5e6e84;border-radius:3px;background:linear-gradient(170deg,#b4c2d2 0,#a2b1c4 40%,#95a6bb 60%,#9aabbf 100%);box-shadow:inset 0 0 0 1px #b8c6d6"></div>
<div class="a" style="left:186px;top:1076px;width:23px;height:18px;border:1px solid #c8d8e8;background:linear-gradient(135deg,#7fbaf0,#2a6cc8);box-shadow:inset 0 -3px 0 #1a3a6a"></div>
<div class="t" style="left:214px;top:1080px;font-size:11px;color:#eef2f6">桌面</div>
<!-- tray -->
<div class="t" style="left:1836px;top:1080px;font-size:10px;color:#eef2f6;font-family:'Liberation Mono'">CH</div>
<div class="a" style="left:1853px;top:1082px;width:13px;height:8px;border:1px solid #c0c4c8;background:#aab4be;border-radius:1px"></div>
<div class="a" style="left:1871px;top:1078px;width:14px;height:14px;border-radius:50%;background:radial-gradient(circle at 40% 35%,#4a6ae0,#0a1a90);border:1px solid #30383e;color:#fff;font-size:10px;line-height:13px;text-align:center;font-weight:bold">?</div>
<div class="a" style="left:1892px;top:1078px;width:6px;height:4px;border:1px solid #eef;transform:skewX(-15deg)"></div>
<div class="a" style="left:1892px;top:1087px;width:0;height:0;border-left:3px solid transparent;border-right:3px solid transparent;border-top:3px solid #eef"></div>
<div class="a" style="left:1906px;top:1086px;width:0;height:0;border-left:4px solid transparent;border-right:4px solid transparent;border-bottom:4px solid #eef"></div>
<div class="a" style="left:1923px;top:1081px;width:5px;height:8px;background:#d8dce0;border-radius:1px"></div>
<div class="a" style="left:1927px;top:1079px;width:9px;height:12px;border-right:2px solid #d8dce0;border-radius:50%"></div>
<div class="a" style="left:1943px;top:1078px;width:1px;height:15px;background:#e0e0e0"></div>
<div class="a" style="left:1944px;top:1078px;width:7px;height:6px;background:#f0f0f0"></div>
<div class="a" style="left:1949px;top:1086px;width:7px;height:7px;border-radius:50%;background:#e02020;border:1px solid #fff"></div>
<div class="a" style="left:1965px;top:1081px;width:11px;height:9px;border:1px solid #e0e4e8;background:#7a8a9a"></div>
<div class="a" style="left:1962px;top:1078px;width:4px;height:8px;border:1px solid #e0e4e8"></div>
<div class="t" style="left:2001px;top:1074px;font-size:10.5px;color:#eef2f6">9:56</div>
<div class="t" style="left:1988px;top:1089px;font-size:10.5px;color:#eef2f6">2025/7/13</div>
<div class="a" style="left:2041px;top:1070px;width:7px;height:32px;background:linear-gradient(90deg,#6a7a8c,#8c9cb0);border-left:1px solid #55606c"></div>

<!-- VBox status bar -->
<div class="a" style="left:0;top:1102px;width:2048px;height:17px;background:#efefef"></div>
<svg class="a" style="left:1815px;top:1103px" width="172" height="16" viewBox="0 0 172 16">
<rect x="4.5" y="2.5" width="10" height="12" rx="1.5" fill="#3a9ae8" stroke="#1a6ac8"/><circle cx="9.5" cy="8" r="3" fill="none" stroke="#fff" stroke-width="1.6"/>
<circle cx="25.5" cy="8.5" r="5.5" fill="#e6e6e6" stroke="#c4c4c4"/><circle cx="25.5" cy="8.5" r="0.8" fill="#bbb"/>
<path d="M36 5h3l3-3v13l-3-3h-3z" fill="#4aa8f0" stroke="#1a6ac8" stroke-width="0.8"/><rect x="43" y="6" width="4" height="9" fill="#d8d8d8"/>
<rect x="55.5" y="2.5" width="7" height="6" fill="#2a7ad8" stroke="#5a5a5a"/><rect x="51.5" y="6.5" width="7" height="6" fill="#2a7ad8" stroke="#5a5a5a"/>
<path d="M66 14l2-5 6-6 2 2-6 6z" fill="#5ab0f0" stroke="#2a80d0" stroke-width="0.8"/>
<path d="M81.5 4.5h4l1 1h5.5v9h-10.5z" fill="#8ccff8" stroke="#2a88e0"/>
<rect x="96.5" y="3.5" width="11" height="9" fill="#2a78d8" stroke="#9a9a9a" stroke-width="1.4"/><path d="M99 14.5h6" stroke="#999"/>
<rect x="114.5" y="2.5" width="8" height="6" fill="#6ab8f8" stroke="#2a70c8"/><rect x="111.5" y="6.5" width="8" height="7" fill="#2a78d8" stroke="#8a8a8a"/>
<rect x="127.5" y="2.5" width="7" height="12" fill="#5a6ad8" stroke="#3a4ab8"/><text x="131" y="12" text-anchor="middle" font-family="Liberation Sans" font-size="8" font-weight="bold" fill="#fff">V</text>
<rect x="136.5" y="2" width="3" height="13" fill="url(#vg)"/><defs><linearGradient id="vg" x1="0" y1="0" x2="0" y2="1"><stop offset="0" stop-color="#e02020"/><stop offset="0.5" stop-color="#f0e020"/><stop offset="1" stop-color="#20a020"/></linearGradient></defs>
<circle cx="147" cy="8.5" r="5.5" fill="#5ab0f0" stroke="#2a80d0"/><path d="M146 5l4 3.5-4 3.5" stroke="#50c020" stroke-width="2.5" fill="none"/>
<rect x="157.5" y="2.5" width="10" height="12" rx="1.5" fill="#5ab8f8" stroke="#2a80d0"/><path d="M162.5 5v5 M160 8l2.5 3 2.5-3" stroke="#0a2a6a" stroke-width="1.6" fill="none"/>
</svg>
<div class="t" style="left:1988px;top:1106px;font-size:11.5px;color:#1e1e1e">Right Ctrl</div>


<!-- ===== VBox status bar ===== -->


</body></html>
